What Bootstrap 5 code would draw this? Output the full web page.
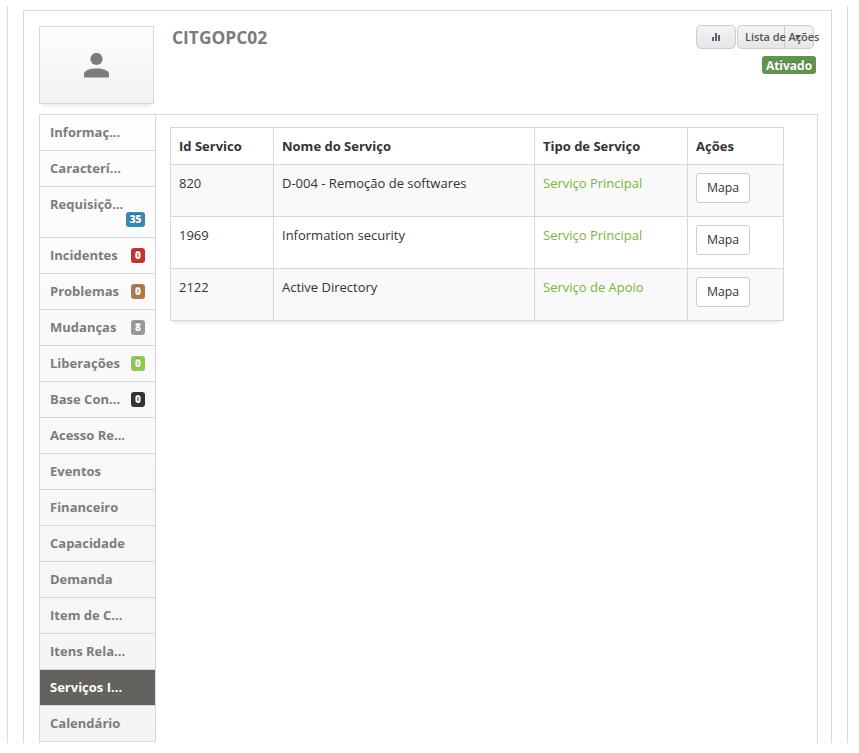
<!DOCTYPE html>
<html lang="pt-BR">
<head>
<meta charset="utf-8">
<title>CITGOPC02</title>
<link href="https://cdn.jsdelivr.net/npm/bootstrap@5.3.0/dist/css/bootstrap.min.css" rel="stylesheet">
<style>
:root{--line:#d8d8d8}
body{font-family:"Open Sans",sans-serif;font-size:13px;line-height:20px;color:#333;background:#fff;height:753px;overflow:hidden}
.page-wrap{padding-top:6px;height:743px;overflow:hidden}
.gutter{width:7px;background:#fcfcfc}
.frame{width:841px;border:solid var(--line);border-width:0 1px;padding:4px 15px 0}
.panel{border:1px solid var(--line);border-bottom:0;height:740px;padding:15px 13px 0 15px}
.top-area{height:88px}
.avatar{width:115px;height:78px;border:1px solid var(--line);background:linear-gradient(#fdfdfd,#f2f2f2);box-shadow:0 5px 3px -3px rgba(0,0,0,.09)}
.avatar svg{margin-top:26px}
.asset-name{font-size:17.4px;line-height:22px;font-weight:700;color:#7c7c7c;margin-left:18px}
.tools{margin-top:-1px}
.tool{height:24px;border:1px solid #ccc;border-radius:5px;background:linear-gradient(#f4f4f4,#e6e6e6);font-size:11px;line-height:22px;color:#555;font-weight:600;white-space:nowrap;padding:0}
.tool-chart{width:40px;margin-right:1px}
.tool-chart svg{margin-bottom:1px}
.tool-list{width:47px;padding-left:7px;border-radius:5px 0 0 5px;border-right:0}
.tool-list span{position:relative;z-index:2;letter-spacing:-.06px}
.tool-caret{width:30px;border-radius:0 5px 5px 0}
.tool-caret svg{margin:0 3px 1px 0}
.state{width:54px;height:18px;line-height:19px;background:#609450;font-size:12px;border-radius:3px;padding:0;margin:7px -2px 0 0;text-shadow:0 -1px 0 rgba(0,0,0,.25)}
.content-box{border:1px solid var(--line);height:640px}
.side{width:116px;border-right:1px solid var(--line);background:linear-gradient(#fdfdfd,#f4f4f4)}
.side a{display:flex;justify-content:space-between;height:36px;padding:7px 10px;border-bottom:1px solid var(--line);font-weight:700;color:#7c7c7c;text-decoration:none;white-space:nowrap}
.side a.tall{height:51px;flex-direction:column;justify-content:flex-start}
.side a.active{background:#63625e;color:#fff}
.count{min-width:14px;height:15px;line-height:15px;font-size:10px;font-weight:800;padding:0 4px;border-radius:3px;margin-top:3px;text-shadow:0 -1px 0 rgba(0,0,0,.25)}
.tall .count{align-self:flex-end;margin-top:-2px;width:19px;padding:0}
.c-blue{background:#3a87ad}.c-red{background:#bd362f}.c-brown{background:#ab7a4b}.c-gray{background:#999}.c-green{background:#8ec657}.c-black{background:#333}
.services{width:614px;margin:12px 0 0 14px;table-layout:fixed;border-collapse:collapse;border-color:var(--line);box-shadow:0 5px 3px -3px rgba(0,0,0,.09);color:#333}
.services th,.services td{border:1px solid var(--line)!important;padding:8px;vertical-align:top;line-height:20px}
.services th{height:37px;font-weight:700;color:#333}
.services td{height:52px}
.services tbody tr:nth-child(odd) td{background:#f9f9f9;box-shadow:none}
.services .kind{color:#7ab541}
.col-id{width:103px}.col-name{width:261px}.col-kind{width:153px}.col-act{width:96px}
.map-btn{width:54px;height:30px;padding:0;font-size:12.3px;line-height:28px;border:1px solid #ccc;border-radius:3px;background:#fff;color:#333;vertical-align:top}
</style>
<script src="https://cdn.jsdelivr.net/npm/bootstrap@5.3.0/dist/js/bootstrap.bundle.min.js"></script>
</head>
<body>
<div class="page-wrap d-flex">
  <div class="gutter"></div>
  <main class="frame">
    <section class="panel">
      <header class="top-area d-flex align-items-start">
        <div class="avatar d-flex justify-content-center">
          <svg width="25" height="25" viewBox="0 0 25 25" fill="#7c7c7c"><circle cx="12.5" cy="6" r="6.1"/><path d="M0 24.500v-3.800C0 17.300 6 15.400 12.500 15.400S25 17.300 25 20.700v3.800z"/></svg>
        </div>
        <h1 class="asset-name mb-0">CITGOPC02</h1>
        <div class="ms-auto d-flex flex-column align-items-end me-1">
          <div class="tools d-flex">
            <button class="btn tool tool-chart d-flex align-items-center justify-content-center" aria-label="Gráfico"><svg width="8" height="8" fill="#6a5a78"><path d="M0 4h2v4H0zM3 0h2v8H3zM6 2h2v6H6z"/></svg></button>
            <button class="btn tool tool-list text-start"><span>Lista de Ações</span></button>
            <button class="btn tool tool-caret d-flex align-items-center justify-content-center" aria-label="Abrir"><svg width="6" height="4" fill="#555"><path d="M0 0h6L3 4z"/></svg></button>
          </div>
          <span class="badge state">Ativado</span>
        </div>
      </header>
      <div class="content-box d-flex align-items-start">
        <nav class="side flex-shrink-0">
          <a href="#">Informaç...</a>
          <a href="#">Caracterí...</a>
          <a href="#" class="tall">Requisiçõ...<span class="badge count c-blue">35</span></a>
          <a href="#">Incidentes<span class="badge count c-red">0</span></a>
          <a href="#">Problemas<span class="badge count c-brown">0</span></a>
          <a href="#">Mudanças<span class="badge count c-gray">8</span></a>
          <a href="#">Liberações<span class="badge count c-green">0</span></a>
          <a href="#">Base Con...<span class="badge count c-black">0</span></a>
          <a href="#">Acesso Re...</a>
          <a href="#">Eventos</a>
          <a href="#">Financeiro</a>
          <a href="#">Capacidade</a>
          <a href="#">Demanda</a>
          <a href="#">Item de C...</a>
          <a href="#">Itens Rela...</a>
          <a href="#" class="active">Serviços I...</a>
          <a href="#">Calendário</a>
        </nav>
        <table class="table services mb-0">
          <colgroup><col class="col-id"><col class="col-name"><col class="col-kind"><col class="col-act"></colgroup>
          <thead><tr><th>Id Servico</th><th>Nome do Serviço</th><th>Tipo de Serviço</th><th>Ações</th></tr></thead>
          <tbody>
            <tr><td>820</td><td>D-004 - Remoção de softwares</td><td class="kind">Serviço Principal</td><td><button class="btn map-btn">Mapa</button></td></tr>
            <tr><td>1969</td><td>Information security</td><td class="kind">Serviço Principal</td><td><button class="btn map-btn">Mapa</button></td></tr>
            <tr><td>2122</td><td>Active Directory</td><td class="kind">Serviço de Apoio</td><td><button class="btn map-btn">Mapa</button></td></tr>
          </tbody>
        </table>
      </div>
    </section>
  </main>
</div>
</body>
</html>
